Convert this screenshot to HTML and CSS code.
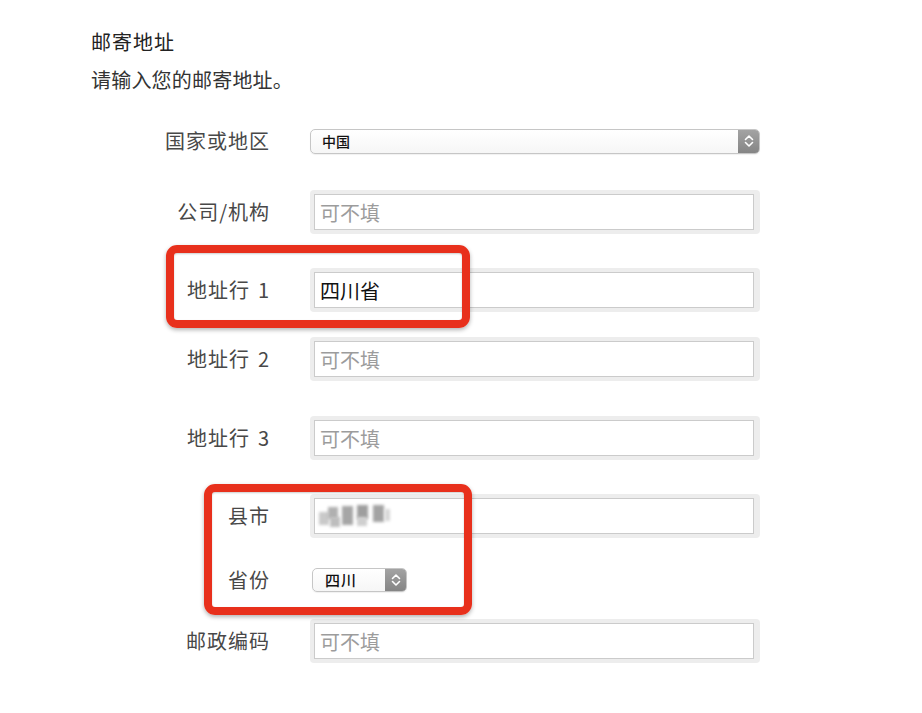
FILE: index.html
```html
<!DOCTYPE html>
<html lang="zh-CN">
<head>
<meta charset="utf-8">
<title>邮寄地址</title>
<link rel="stylesheet" href="styles.css">
</head>
<body>
<main class="page">
  <h1 class="title">邮寄地址</h1>
  <p class="intro">请输入您的邮寄地址。</p>
  <form class="form">
    <div class="row r1">
      <label class="lbl">国家或地区</label>
      <div class="select wide">
        <span class="select-text">中国</span>
        <span class="stepper"><svg width="10" height="14" viewBox="0 0 10 14"><path d="M1.5 5.5 L5 2 L8.5 5.5 M1.5 8.5 L5 12 L8.5 8.5" fill="none" stroke="#fff" stroke-width="1.6" stroke-linecap="round" stroke-linejoin="round"/></svg></span>
      </div>
    </div>
    <div class="row r2">
      <label class="lbl">公司/机构</label>
      <div class="field"><input class="inp" placeholder="可不填"></div>
    </div>
    <div class="row r3">
      <label class="lbl">地址行<span class="sp"></span>1</label>
      <div class="field"><input class="inp" value="四川省"></div>
    </div>
    <div class="row r4">
      <label class="lbl">地址行<span class="sp"></span>2</label>
      <div class="field"><input class="inp" placeholder="可不填"></div>
    </div>
    <div class="row r5">
      <label class="lbl">地址行<span class="sp"></span>3</label>
      <div class="field"><input class="inp" placeholder="可不填"></div>
    </div>
    <div class="row r6">
      <label class="lbl">县市</label>
      <div class="field field-blur">
        <div class="inp mosaic">
          <span class="px p1"></span><span class="px p2"></span><span class="px p3"></span><span class="px p4"></span><span class="px p5"></span><span class="px p6"></span><span class="px p7"></span><span class="px p8"></span>
        </div>
      </div>
    </div>
    <div class="row r7">
      <label class="lbl">省份</label>
      <div class="select small">
        <span class="select-text">四川</span>
        <span class="stepper"><svg width="10" height="14" viewBox="0 0 10 14"><path d="M1.5 5.5 L5 2 L8.5 5.5 M1.5 8.5 L5 12 L8.5 8.5" fill="none" stroke="#fff" stroke-width="1.6" stroke-linecap="round" stroke-linejoin="round"/></svg></span>
      </div>
    </div>
    <div class="row r8">
      <label class="lbl">邮政编码</label>
      <div class="field"><input class="inp" placeholder="可不填"></div>
    </div>
  </form>
  <div class="mark mark-1"></div>
  <div class="mark mark-2"></div>
</main>
</body>
</html>
```
FILE: styles.css
```css
html, body {
  margin: 0;
  background: #ffffff;
}
body {
  font-family: "Noto Sans CJK SC", "Noto Sans", sans-serif;
  color: #333;
}
.page {
  position: relative;
  padding: 28px 0 0 91px;
  width: 831px;
  height: 685px;
}
.title {
  margin: 0;
  font-size: 20px;
  font-weight: 400;
  line-height: 28px;
  letter-spacing: 1px;
  color: #222;
}
.intro {
  margin: 10px 0 0;
  font-size: 20px;
  line-height: 28px;
  letter-spacing: 0.2px;
  color: #333;
}
.form {
  display: flex;
  flex-direction: column;
}
.row {
  display: grid;
  grid-template-columns: 179px 450px;
  column-gap: 40px;
  height: 44px;
  align-items: center;
}
.r1 { margin-top: 25px; }
.r2 { margin-top: 27px; }
.r3 { margin-top: 34px; }
.r4 { margin-top: 25px; }
.r5 { margin-top: 35px; }
.r6 { margin-top: 34px; }
.r7 { margin-top: 20px; }
.r8 { margin-top: 17px; }
.lbl {
  text-align: right;
  font-size: 20px;
  line-height: 28px;
  letter-spacing: 1px;
  color: #484848;
}
.sp {
  display: inline-block;
  width: 8px;
}
.field {
  padding: 4px 6px 4px 4px;
  background: #ededed;
  border-radius: 4px;
}
.inp {
  display: block;
  box-sizing: border-box;
  width: 100%;
  height: 36px;
  margin: 0;
  padding: 0 5px;
  border: 1px solid #cbcbcb;
  background: #fff;
  font-family: "Noto Sans CJK SC", "Noto Sans", sans-serif;
  font-size: 20px;
  color: #111;
  outline: none;
}
.inp::placeholder {
  color: #9c9c9c;
}
.mosaic {
  position: relative;
}
.px {
  position: absolute;
  filter: blur(1.6px);
}
.p1 { left: 4px; top: 13px; width: 10px; height: 13px; background: #c9c9c9; }
.p2 { left: 13px; top: 8px; width: 10px; height: 12px; background: #b0b0b0; }
.p3 { left: 15px; top: 18px; width: 10px; height: 10px; background: #bdbdbd; }
.p4 { left: 27px; top: 7px; width: 11px; height: 19px; background: #a6a6a6; }
.p5 { left: 42px; top: 6px; width: 11px; height: 14px; background: #9e9e9e; }
.p6 { left: 42px; top: 18px; width: 10px; height: 9px; background: #cfcfcf; }
.p7 { left: 58px; top: 6px; width: 11px; height: 17px; background: #a3a3a3; }
.p8 { left: 70px; top: 10px; width: 5px; height: 12px; background: #d6d6d6; }
.select {
  box-sizing: border-box;
  display: flex;
  align-items: center;
  border: 1px solid #c6c6c6;
  border-radius: 5px;
  background: linear-gradient(#ffffff, #f6f6f6);
  overflow: hidden;
  box-shadow: 0 1px 1px rgba(0,0,0,0.06);
}
.select.wide {
  width: 450px;
  height: 25px;
}
.select.small {
  width: 95px;
  height: 24px;
  margin-left: 2px;
}
.select-text {
  flex: 1;
  padding-left: 11px;
  font-size: 14px;
  font-weight: 500;
  color: #111;
  line-height: 22px;
}
.select.small .select-text {
  font-size: 15px;
  padding-left: 12px;
  letter-spacing: 1px;
}
.stepper {
  width: 21px;
  align-self: stretch;
  display: flex;
  align-items: center;
  justify-content: center;
  background: linear-gradient(#a3a3a3, #858585);
}
.mark {
  position: absolute;
  box-sizing: border-box;
  border: 8px solid #e8301c;
  border-radius: 11px;
  box-shadow: 0 2px 4px rgba(0,0,0,0.3), inset 0 1px 2px rgba(0,0,0,0.2);
}
.mark-1 {
  left: 166px;
  top: 245px;
  width: 304px;
  height: 83px;
}
.mark-2 {
  left: 204px;
  top: 484px;
  width: 268px;
  height: 131px;
}
```
